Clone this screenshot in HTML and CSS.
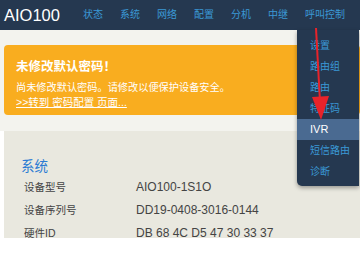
FILE: index.html
```html
<!DOCTYPE html>
<html lang="zh-CN">
<head>
  <meta charset="UTF-8">
  <title>AIO100</title>
  <link rel="stylesheet" href="styles.css">
</head>
<body>
  <div class="topbar">
    <div class="logo">AIO100</div>
    <ul class="nav">
      <li>状态</li>
      <li>系统</li>
      <li>网络</li>
      <li>配置</li>
      <li>分机</li>
      <li>中继</li>
      <li class="open">呼叫控制
        <ul class="dropdown">
          <li>设置</li>
          <li>路由组</li>
          <li>路由</li>
          <li>特征码</li>
          <li class="active">IVR</li>
          <li>短信路由</li>
          <li>诊断</li>
        </ul>
      </li>
    </ul>
  </div>
  <div class="notice-wrap">
    <div class="notice">
      <div class="notice-title">未修改默认密码！</div>
      <div class="notice-text">尚未修改默认密码。请修改以便保护设备安全。</div>
      <a class="notice-link">&gt;&gt;转到 密码配置 页面...</a>
    </div>
  </div>
  <div class="info">
    <h3>系统</h3>
    <table>
      <tr><td>设备型号</td><td>AIO100-1S1O</td></tr>
      <tr><td>设备序列号</td><td>DD19-0408-3016-0144</td></tr>
      <tr><td>硬件ID</td><td>DB 68 4C D5 47 30 33 37</td></tr>
    </table>
  </div>
  <svg class="arrow" width="30" height="100" viewBox="0 0 30 100">
    <line x1="10" y1="0" x2="14" y2="74" stroke="#e8232a" stroke-width="2"/>
    <polygon points="6,69 23,68 15,92" fill="#e8232a"/>
  </svg>
</body>
</html>
```

FILE: styles.css
```css
body {
  margin: 0;
  font-family: "Liberation Sans", "Noto Sans CJK SC", sans-serif;
  background-color: #fff;
  width: 360px;
  height: 270px;
  overflow: hidden;
  position: relative;
}
.topbar {
  height: 30px;
  background-color: #253850;
  display: flex;
  align-items: center;
}
.logo {
  color: #fff;
  font-size: 16.5px;
  margin-left: 4px;
  width: 79px;
}
.nav {
  list-style: none;
  margin: 0;
  padding: 0;
  display: flex;
  gap: 17px;
}
.nav > li {
  color: #3b98d6;
  font-size: 10px;
  line-height: 30px;
}
.open {
  position: relative;
}
.dropdown {
  position: absolute;
  top: 30px;
  left: -8px;
  width: 62px;
  box-sizing: border-box;
  margin: 0;
  padding: 4.5px 0 4px;
  list-style: none;
  background-color: #253850;
  border-radius: 0 0 0 5px;
  box-shadow: 0 2px 4px rgba(0, 0, 0, 0.35);
  z-index: 2;
}
.dropdown li {
  height: 21px;
  line-height: 21px;
  padding-left: 13px;
  font-size: 10px;
  color: #3b98d6;
  white-space: nowrap;
}
.dropdown li.active {
  background-color: #4a6a91;
  color: #fff;
  font-size: 11px;
}
.notice-wrap {
  background-color: #f3f3ee;
  padding: 15px 0 16px 4px;
}
.notice {
  background-color: #f9ad1f;
  border-radius: 4px;
  height: 70px;
  padding: 13px 0 0 12px;
  box-sizing: border-box;
  color: #fff;
}
.notice-title {
  font-size: 12.5px;
  font-weight: bold;
  line-height: 18px;
}
.notice-text {
  font-size: 10.2px;
  line-height: 14px;
  margin-top: 5px;
}
.notice-link {
  display: block;
  font-size: 10.5px;
  line-height: 14px;
  text-decoration: underline;
}
.info {
  margin-left: 4px;
  height: 107px;
  background-color: #e9e8df;
  padding: 28px 0 0 17px;
  box-sizing: border-box;
}
.info h3 {
  margin: 0;
  color: #2b7bd3;
  font-size: 13.5px;
  font-weight: normal;
  line-height: 16px;
}
.info table {
  border-collapse: collapse;
  margin-left: 3px;
}
.info td {
  font-size: 12px;
  color: #444;
  height: 23px;
  padding: 0;
}
.info td:first-child {
  width: 112px;
  font-size: 10.5px;
}
.arrow {
  position: absolute;
  left: 306px;
  top: 28px;
  z-index: 3;
}
```
